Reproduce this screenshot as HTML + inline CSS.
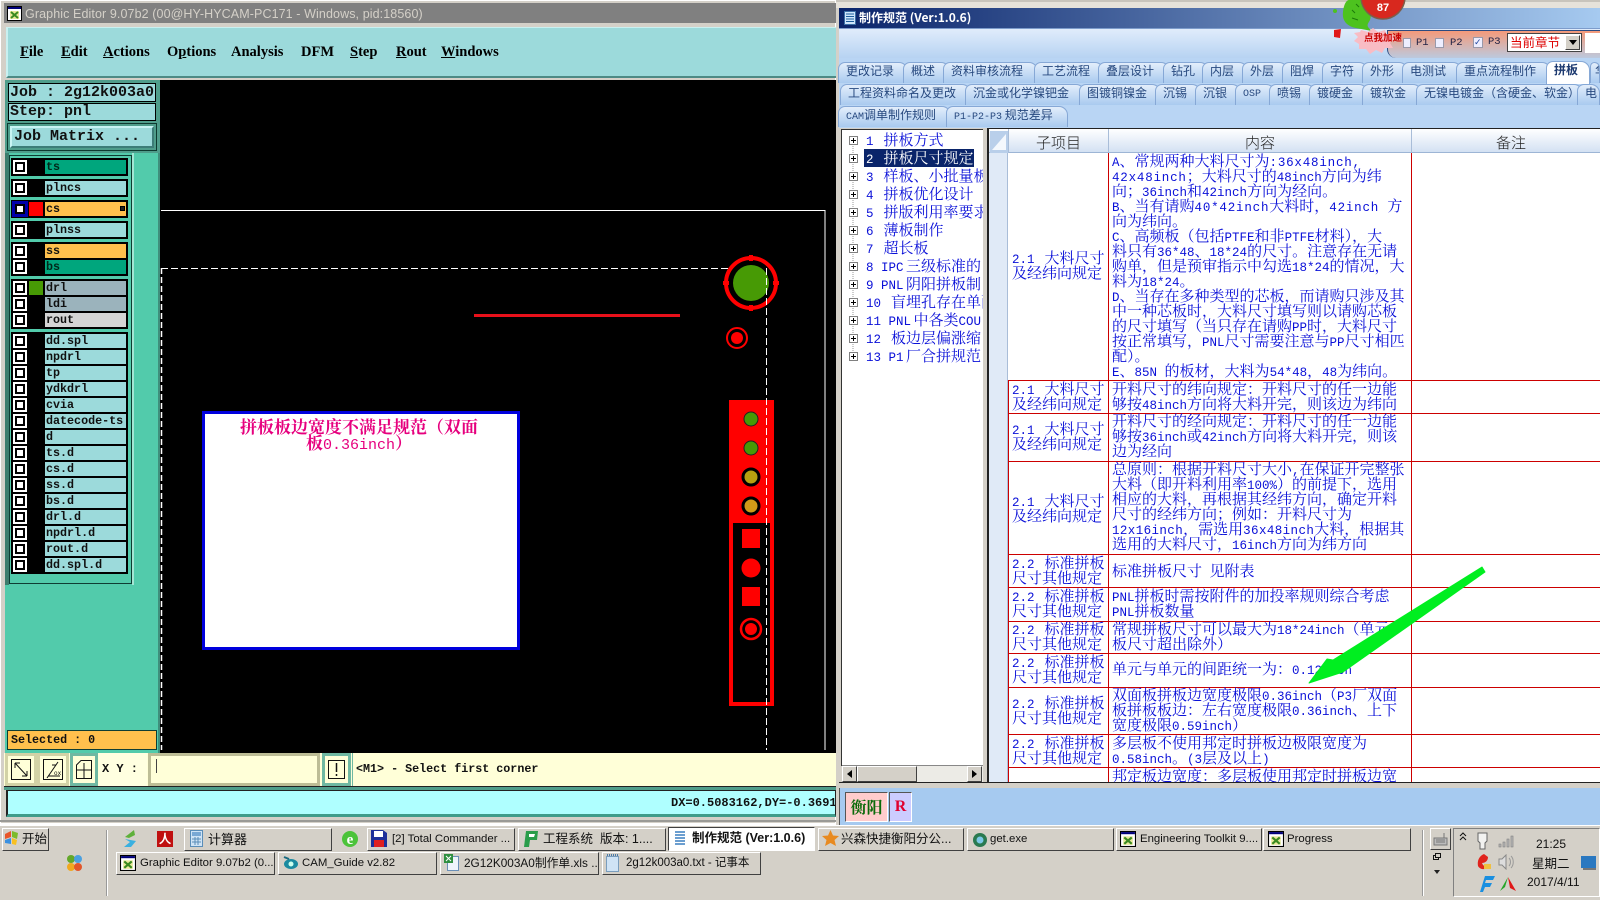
<!DOCTYPE html>
<html><head><meta charset="utf-8"><title>Graphic Editor</title>
<style>
html,body{margin:0;padding:0;width:1600px;height:900px;overflow:hidden;background:#d4d0c8}
div,span.a,svg{position:absolute;white-space:nowrap;box-sizing:border-box}
body{font-family:"Liberation Sans","WenQuanYi Zen Hei",sans-serif}
.m{font-family:"Liberation Serif",serif;font-weight:bold;font-size:14.5px;top:44px;color:#000}
.m i{font-style:normal;text-decoration:underline}
.mono{font-family:"Liberation Mono",monospace;font-weight:bold;color:#111}
.g{left:11px;width:117px;background:#000}
.ck{left:13px;width:14px;height:14px;background:#fff}
.ck:after{content:"";position:absolute;left:2px;top:2px;width:10px;height:10px;border:2px solid #000;background:#fff;box-sizing:border-box}
.n{left:45px;width:81px;height:14px;background:#9cdadb;font:bold 11.7px/14px "Liberation Mono",monospace;padding-left:1px;color:#101010}
.tab{height:21px;background:linear-gradient(#e3eefb,#a9caef);border:1px solid #86a8d6;border-bottom:0;border-radius:7px 9px 0 0;font:12px/15px "WenQuanYi Zen Hei","Noto Sans CJK SC",sans-serif;color:#27497f;padding-left:7px;overflow:hidden}
.cell{font:15px/15px "Noto Serif CJK SC","Noto Sans CJK SC",serif;color:#0a10d8;margin-top:-1px}
.cell p{margin:0;height:15px;line-height:15px;white-space:nowrap}
u{font:12.5px/15px "Liberation Mono",monospace;text-decoration:none}
u.s{padding-right:2.5px}
u.x{letter-spacing:.8px}
u.y{letter-spacing:.4px}
.tr{left:864px;font:15px/18px "Noto Serif CJK SC",serif;color:#0a10d8;height:18px;width:119px;overflow:hidden;padding-left:2px}
.pl{left:849px;width:9px;height:9px;border:1px solid #808080;background:#fff}
.pl:before{content:"";position:absolute;left:1px;top:3px;width:5px;height:1px;background:#000}
.pl:after{content:"";position:absolute;left:3px;top:1px;width:1px;height:5px;background:#000}
.rh{background:#cc0000;height:1px;left:1008px;width:592px}
.tb{height:23px;background:#d4d0c8;border:1px solid;border-color:#fff #404040 #404040 #fff;font:11.4px/21px "Liberation Sans","WenQuanYi Zen Hei",sans-serif;color:#111;overflow:hidden}
.pt{font:10.5px/14px "Liberation Mono",monospace;color:#224}
</style></head><body>

<!-- LEFT WINDOW -->
<div style="left:0;top:0;width:836px;height:826px;background:#d4d0c8;border:1px solid #fff"></div>
<div style="left:4px;top:3px;width:832px;height:20px;background:#808080"></div>
<svg style="left:7px;top:6px" width="15" height="15" viewBox="0 0 15 15"><rect x="0.5" y="0.5" width="14" height="14" fill="#fff" stroke="#000"/><rect x="1" y="1" width="13" height="2" fill="#00007a"/><rect x="3" y="5" width="9" height="8" fill="#e8e89a"/><path d="M4 6l7 6M11 6l-7 6" stroke="#3a8a20" stroke-width="2"/></svg>
<div style="left:25px;top:5px;font:12.5px/18px 'Liberation Sans',sans-serif;color:#d4d0c8;letter-spacing:.1px">Graphic Editor 9.07b2 (00@HY-HYCAM-PC171 - Windows, pid:18560)</div>

<div style="left:6px;top:27px;width:830px;height:51px;background:#9cdadb;border-left:2px solid #c9f0f0;border-top:1px solid #c9f0f0;border-bottom:2px solid #4d8a85"></div>
<div class="m" style="left:20px"><i>F</i>ile</div>
<div class="m" style="left:61px"><i>E</i>dit</div>
<div class="m" style="left:103px"><i>A</i>ctions</div>
<div class="m" style="left:167px">O<i>p</i>tions</div>
<div class="m" style="left:231px">Analysis</div>
<div class="m" style="left:301px">DFM</div>
<div class="m" style="left:350px"><i>S</i>tep</div>
<div class="m" style="left:396px"><i>R</i>out</div>
<div class="m" style="left:441px"><i>W</i>indows</div>

<!-- Canvas -->
<div style="left:158px;top:80px;width:678px;height:673px;background:#000"></div>
<svg style="left:158px;top:80px" width="678" height="673" viewBox="158 80 678 673">
<path d="M161 210.500H825V750" fill="none" stroke="#fff" stroke-width="1"/>
<path d="M161 268.500H750" fill="none" stroke="#fff" stroke-width="1" stroke-dasharray="7 3"/>
<path d="M161.500 268V750" fill="none" stroke="#fff" stroke-width="1.500" stroke-dasharray="6 3"/>
<rect x="474" y="314" width="206" height="3" fill="#e8101a"/>
<circle cx="751" cy="283" r="25" fill="#000" stroke="#f00" stroke-width="4"/>
<circle cx="751" cy="283" r="18" fill="#479a05"/>
<path d="M751 255v6M751 305v6M723 283h6M773 283h6" stroke="#f00" stroke-width="4"/>
<circle cx="737" cy="338" r="10" fill="#000" stroke="#f00" stroke-width="2"/>
<circle cx="737" cy="338" r="6" fill="#f00"/>
<rect x="729" y="400" width="45" height="122" fill="#f00"/>
<rect x="731" y="521" width="41" height="183" fill="#000" stroke="#f00" stroke-width="4"/>
<circle cx="751" cy="419" r="7" fill="#479a05" stroke="#222" stroke-width="1"/>
<circle cx="751" cy="448" r="7" fill="#479a05" stroke="#222" stroke-width="1"/>
<circle cx="751" cy="477" r="8" fill="#b8a010" stroke="#000" stroke-width="3"/>
<circle cx="751" cy="506" r="8" fill="#d09a18" stroke="#000" stroke-width="3"/>
<rect x="742" y="529" width="18" height="19" fill="#f00"/>
<circle cx="751" cy="568" r="9.500" fill="#f00"/>
<rect x="742" y="587" width="18" height="19" fill="#f00"/>
<circle cx="751" cy="629" r="10" fill="#000" stroke="#f00" stroke-width="2.500"/>
<circle cx="751" cy="629" r="6" fill="#f00"/>
<path d="M766.500 268V750" fill="none" stroke="#fff" stroke-width="1" stroke-dasharray="7 3"/>
</svg>
<div style="left:202px;top:411px;width:318px;height:239px;background:#fff;border:3px solid #0000dd"></div>
<div style="left:203px;top:418px;width:312px;text-align:center;font:bold 17px/16px 'Noto Serif CJK SC',serif;color:#e6007e;white-space:normal;letter-spacing:0">拼板板边宽度不满足规范（双面<br>板<span style="font:15px/16px 'Liberation Mono',monospace">0.36inch</span>）</div>

<!-- Left Panel -->
<div style="left:5px;top:80px;width:155px;height:673px;background:#52cbab;border-right:2px solid #3f8f7c"></div>
<div style="left:5px;top:80px;width:155px;height:73px;background:#4f9d8b"></div>
<div style="left:8px;top:83px;width:148px;height:19px;background:#9cdadb;border:1px solid #000;font:bold 15px/17px 'Liberation Mono',monospace;padding-left:1px;color:#111">Job : 2g12k003a0</div>
<div style="left:8px;top:103px;width:148px;height:18px;background:#9cdadb;border:1px solid #000;font:bold 15px/16px 'Liberation Mono',monospace;padding-left:1px;color:#111">Step: pnl</div>
<div style="left:7px;top:123px;width:150px;height:28px;border:1px solid #0d3a30;background:#4f9d8b"></div>
<div style="left:10px;top:126px;width:144px;height:22px;background:#9cdadb;border:2px solid;border-color:#c8f4f4 #3d7d78 #3d7d78 #c8f4f4;font:bold 15px/18px 'Liberation Mono',monospace;padding-left:2px;color:#111">Job Matrix ...</div>
<div style="left:5px;top:153px;width:4px;height:432px;background:#3d7d6d"></div>
<div style="left:9px;top:155px;width:123px;height:429px;border:1px solid #0f3d33;background:#52cbab"></div>
<div style="left:132px;top:153px;width:2px;height:432px;background:#a4e6d4"></div>

<div class="g" style="top:158px;height:18px"></div>
<div class="g" style="top:179px;height:18px"></div>
<div class="g" style="top:200px;height:18px"></div>
<div class="g" style="top:221px;height:18px"></div>
<div class="g" style="top:242px;height:34px"></div>
<div class="g" style="top:279px;height:50px"></div>
<div class="g" style="top:332px;height:242px"></div>

<div class="ck" style="top:160px"></div><div class="n" style="top:160px;background:#00a67d;color:#00281a">ts</div>
<div class="ck" style="top:181px"></div><div class="n" style="top:181px">plncs</div>
<div style="left:12px;top:201px;width:16px;height:16px;background:#0000aa"></div><div class="ck" style="top:202px;background:#0000aa"></div>
<div style="left:29px;top:202px;width:14px;height:14px;background:#f00"></div>
<div class="n" style="top:202px;background:#ffc04d">cs</div>
<div style="left:120px;top:206px;width:5px;height:5px;border:1px solid #000;background:#222"></div>
<div class="ck" style="top:223px"></div><div class="n" style="top:223px">plnss</div>
<div class="ck" style="top:244px"></div><div class="n" style="top:244px;background:#ffc04d">ss</div>
<div class="ck" style="top:260px"></div><div class="n" style="top:260px;background:#00a67d;color:#00281a">bs</div>
<div class="ck" style="top:281px"></div><div style="left:29px;top:281px;width:14px;height:14px;background:#479a05"></div><div class="n" style="top:281px;background:#9bb3bc">drl</div>
<div class="ck" style="top:297px"></div><div class="n" style="top:297px;background:#9bb3bc">ldi</div>
<div class="ck" style="top:313px"></div><div class="n" style="top:313px;background:#d4d4d4">rout</div>
<div class="ck" style="top:334px"></div><div class="n" style="top:334px">dd.spl</div>
<div class="ck" style="top:350px"></div><div class="n" style="top:350px">npdrl</div>
<div class="ck" style="top:366px"></div><div class="n" style="top:366px">tp</div>
<div class="ck" style="top:382px"></div><div class="n" style="top:382px">ydkdrl</div>
<div class="ck" style="top:398px"></div><div class="n" style="top:398px">cvia</div>
<div class="ck" style="top:414px"></div><div class="n" style="top:414px">datecode-ts</div>
<div class="ck" style="top:430px"></div><div class="n" style="top:430px">d</div>
<div class="ck" style="top:446px"></div><div class="n" style="top:446px">ts.d</div>
<div class="ck" style="top:462px"></div><div class="n" style="top:462px">cs.d</div>
<div class="ck" style="top:478px"></div><div class="n" style="top:478px">ss.d</div>
<div class="ck" style="top:494px"></div><div class="n" style="top:494px">bs.d</div>
<div class="ck" style="top:510px"></div><div class="n" style="top:510px">drl.d</div>
<div class="ck" style="top:526px"></div><div class="n" style="top:526px">npdrl.d</div>
<div class="ck" style="top:542px"></div><div class="n" style="top:542px">rout.d</div>
<div class="ck" style="top:558px"></div><div class="n" style="top:558px">dd.spl.d</div>

<div style="left:7px;top:730px;width:150px;height:20px;background:#ffc04d;border:1px solid #0f3d33;font:bold 11.7px/18px 'Liberation Mono',monospace;padding-left:3px;color:#111">Selected : 0</div>

<!-- Bottom tool row -->
<div style="left:4px;top:753px;width:832px;height:34px;background:#ffffd8;border-bottom:1px solid #222"></div>
<div style="left:5px;top:753px;width:32px;height:33px;background:#ffffd8;border:3px solid #d2d2a6"></div>
<svg style="left:11px;top:759px" width="20" height="21" viewBox="0 0 20 21"><rect x=".5" y=".5" width="19" height="20" fill="none" stroke="#111"/><path d="M4 4l12 13M4 4v5M4 4h5M16 17v-5M16 17h-5" fill="none" stroke="#111"/></svg>
<div style="left:37px;top:753px;width:32px;height:33px;background:#ffffd8;border:3px solid #d2d2a6"></div>
<svg style="left:43px;top:759px" width="20" height="21" viewBox="0 0 20 21"><rect x=".5" y=".5" width="19" height="20" fill="none" stroke="#111"/><path d="M15 3L4 19M5 17H17M9 6h4" fill="none" stroke="#111"/><text x="11" y="16" font-size="6" font-family="Liberation Mono">ox</text></svg>
<div style="left:70px;top:753px;width:28px;height:33px;background:#ffffd8;border:3px solid #6fb8a2"></div>
<svg style="left:76px;top:760px" width="16" height="19" viewBox="0 0 16 19"><path d="M5 .5H15.500V18.500H.5V5zM8 3v15M1 10h14" fill="none" stroke="#111"/></svg>
<div style="left:99px;top:753px;width:48px;height:33px;background:#ffffe0;font:bold 12px/33px 'Liberation Mono',monospace;padding-left:3px;color:#111">X Y :</div>
<div style="left:148px;top:753px;width:172px;height:33px;background:#ffffd8;border:3px solid #bdbd96"></div>
<div style="left:156px;top:759px;width:1px;height:14px;background:#444"></div>
<div style="left:322px;top:753px;width:29px;height:33px;background:#ffffd8;border:3px solid #6fb8a2"></div>
<svg style="left:328px;top:760px" width="17" height="19" viewBox="0 0 17 19"><rect x=".5" y=".5" width="16" height="18" fill="none" stroke="#111"/><path d="M8.500 3v9M8.500 14v2" stroke="#111" stroke-width="1.500"/></svg>
<div style="left:352px;top:753px;width:484px;height:33px;background:#ffffd8;font:bold 11.7px/33px 'Liberation Mono',monospace;padding-left:3px;color:#111;border-left:1px solid #6fb8a2">&lt;M1&gt; - Select first corner</div>

<div style="left:4px;top:787px;width:832px;height:3px;background:#4f9d8b"></div>
<div style="left:6px;top:790px;width:830px;height:27px;background:#afffff;border:1px solid #222;border-left:2px solid #222;border-bottom:3px solid #3f9c8a;overflow:hidden"><span class="mono a" style="left:663px;top:5px;font-size:12px;line-height:14px">DX=0.5083162,DY=-0.36912</span></div>
<div style="left:0;top:820px;width:836px;height:2px;background:#9a9a96"></div>
<div style="left:0;top:823px;width:836px;height:2px;background:#fff"></div>

<!-- RIGHT WINDOW -->
<div style="left:836px;top:0;width:764px;height:8px;background:#e6e2da;border-top:2px solid #c8c4bc"></div>
<div style="left:836px;top:8px;width:4px;height:780px;background:#d4d0c8"></div>
<div style="left:839px;top:8px;width:761px;height:20px;background:linear-gradient(90deg,#0a246a,#a6caf0)"></div>
<svg style="left:844px;top:11px" width="12" height="14" viewBox="0 0 12 14"><rect x=".5" y=".5" width="11" height="13" fill="#cfe6fb" stroke="#3a6ea5"/><path d="M2 3h8M2 5.500h8M2 8h8M2 10.500h8" stroke="#1c5d9c"/></svg>
<div style="left:859px;top:9px;font:bold 12px/18px 'Noto Sans CJK SC','Liberation Sans',sans-serif;color:#fff">制作规范 (Ver:1.0.6)</div>

<div style="left:839px;top:28px;width:761px;height:30px;background:linear-gradient(#e0ecfb,#b7d3f2);border-top:1px solid #7d9ccb"></div>
<div style="left:1387px;top:30px;width:213px;height:28px;background:linear-gradient(#f49a7a,#bcc9de);border-bottom-left-radius:9px;border-left:1px solid #2b4a80;border-top:1px solid #2b4a80"></div>
<div style="left:1403px;top:38px;width:8px;height:10px;background:#eef;border:1px solid #99a"></div>
<div class="pt" style="left:1416px;top:36px">P1</div>
<div style="left:1435px;top:38px;width:9px;height:10px;background:#eef;border:1px solid #99a"></div>
<div class="pt" style="left:1450px;top:36px">P2</div>
<div style="left:1473px;top:37px;width:10px;height:11px;background:#eef;border:1px solid #99a;font:9px/9px sans-serif;color:#2248a0">✓</div>
<div class="pt" style="left:1488px;top:35px">P3</div>
<div style="left:1507px;top:33px;width:75px;height:19px;background:#fff;border:1px solid #444;font:12.500px/16px 'Noto Sans CJK SC',sans-serif;color:#d00;padding-left:2px">当前章节</div>
<div style="left:1565px;top:35px;width:15px;height:15px;background:#d4d0c8;border:1px solid;border-color:#fff #404040 #404040 #fff"></div>
<svg style="left:1569px;top:40px" width="8" height="6"><path d="M0 0h8L4 5z" fill="#000"/></svg>
<div style="left:1585px;top:33px;width:15px;height:20px;background:#fff"></div>

<svg style="left:1330px;top:0" width="80" height="56" viewBox="0 0 80 56">
<path d="M13 12C14 3 17 0 19 0H34C40 6 42 14 40 20C37 25 36 26 42 31L26 28C16 26 12 20 13 12Z" fill="#4dc21f"/>
<path d="M22 10l3 3M26 4l3 3M22 18l6 2" stroke="#1c7a0a" fill="none"/>
<circle cx="5" cy="11" r="2" fill="#4dc21f"/>
<circle cx="53" cy="-3" r="22" fill="#d8281e" stroke="#7e5c48" stroke-width="1.500"/>
<text x="53" y="11" text-anchor="middle" font-family="Liberation Sans" font-weight="bold" font-size="11" fill="#fff">87</text>
<path d="M4 30l7-1-1 9-6-1z" fill="#e01818"/>
<path d="M31 30l7 2 5-4 5 4 7-2 1 4 7 1 1 4 -4 4 3 5-8 0-3 5-6-3-6 4-4-5-7 0 0-5-5-3 4-4-4-4 6-1z" fill="#f9bcc4"/>
</svg>
<div style="left:1364px;top:31px;font:bold 9.500px/12px 'Noto Sans CJK SC',sans-serif;color:#c80000">点我加速</div>

<div style="left:839px;top:58px;width:761px;height:70px;background:#b9d5f4"></div>

<div class="tab" style="left:838px;top:62px;width:70px">更改记录</div>
<div class="tab" style="left:903px;top:62px;width:47px">概述</div>
<div class="tab" style="left:943px;top:62px;width:95px">资料审核流程</div>
<div class="tab" style="left:1034px;top:62px;width:70px">工艺流程</div>
<div class="tab" style="left:1098px;top:62px;width:72px">叠层设计</div>
<div class="tab" style="left:1163px;top:62px;width:46px">钻孔</div>
<div class="tab" style="left:1202px;top:62px;width:46px">内层</div>
<div class="tab" style="left:1242px;top:62px;width:46px">外层</div>
<div class="tab" style="left:1282px;top:62px;width:46px">阻焊</div>
<div class="tab" style="left:1322px;top:62px;width:46px">字符</div>
<div class="tab" style="left:1362px;top:62px;width:46px">外形</div>
<div class="tab" style="left:1402px;top:62px;width:60px">电测试</div>
<div class="tab" style="left:1456px;top:62px;width:95px">重点流程制作</div>
<div class="tab" style="left:1590px;top:62px;width:10px;padding-left:4px">华</div>
<div class="tab" style="left:1546px;top:61px;width:44px;height:23px;background:#fff;font-weight:bold;color:#1d3a70;line-height:16px">拼板</div>

<div class="tab" style="left:840px;top:84px;width:131px">工程资料命名及更改</div>
<div class="tab" style="left:965px;top:84px;width:120px">沉金或化学镍钯金</div>
<div class="tab" style="left:1079px;top:84px;width:82px">图镀铜镍金</div>
<div class="tab" style="left:1155px;top:84px;width:46px">沉锡</div>
<div class="tab" style="left:1195px;top:84px;width:46px">沉银</div>
<div class="tab" style="left:1235px;top:84px;width:40px;font-family:'Liberation Mono',monospace;font-size:10px;line-height:20px">OSP</div>
<div class="tab" style="left:1269px;top:84px;width:46px">喷锡</div>
<div class="tab" style="left:1309px;top:84px;width:59px">镀硬金</div>
<div class="tab" style="left:1362px;top:84px;width:60px">镀软金</div>
<div class="tab" style="left:1416px;top:84px;width:167px">无镍电镀金（含硬金、软金）</div>
<div class="tab" style="left:1577px;top:84px;width:23px">电</div>

<div class="tab" style="left:838px;top:106px;width:113px"><span style="font:10px/15px 'Liberation Mono',monospace">CAM</span>调单制作规则</div>
<div class="tab" style="left:946px;top:106px;width:122px"><span style="font:10px/15px 'Liberation Mono',monospace">P1-P2-P3</span> 规范差异</div>

<div style="left:839px;top:128px;width:761px;height:660px;background:#d4d0c8"></div>

<!-- Tree -->
<div style="left:841px;top:129px;width:142px;height:637px;background:#fff;border-left:1px solid #333;border-top:1px solid #333"></div>
<svg style="left:842px;top:130px" width="20" height="235"><path d="M11 6V226" stroke="#999" stroke-dasharray="1 1"/><path d="M11 10h6M11 28h6M11 46h6M11 64h6M11 82h6M11 100h6M11 118h6M11 136h6M11 154h6M11 172h6M11 190h6M11 208h6M11 226h6" stroke="#999" stroke-dasharray="1 1"/></svg>
<div class="pl" style="top:136px"></div>
<div class="pl" style="top:154px"></div>
<div class="pl" style="top:172px"></div>
<div class="pl" style="top:190px"></div>
<div class="pl" style="top:208px"></div>
<div class="pl" style="top:226px"></div>
<div class="pl" style="top:244px"></div>
<div class="pl" style="top:262px"></div>
<div class="pl" style="top:280px"></div>
<div class="pl" style="top:298px"></div>
<div class="pl" style="top:316px"></div>
<div class="pl" style="top:334px"></div>
<div class="pl" style="top:352px"></div>
<div class="tr" style="top:131px"><u class="s">1&nbsp;</u>拼板方式</div>
<div style="left:864px;top:149px;width:110px;height:18px;background:#0a246a"></div>
<div class="tr" style="top:149px;color:#fff"><u class="s">2&nbsp;</u>拼板尺寸规定</div>
<div class="tr" style="top:167px"><u class="s">3&nbsp;</u>样板、小批量板</div>
<div class="tr" style="top:185px"><u class="s">4&nbsp;</u>拼板优化设计</div>
<div class="tr" style="top:203px"><u class="s">5&nbsp;</u>拼版利用率要求</div>
<div class="tr" style="top:221px"><u class="s">6&nbsp;</u>薄板制作</div>
<div class="tr" style="top:239px"><u class="s">7&nbsp;</u>超长板</div>
<div class="tr" style="top:257px"><u class="s">8&nbsp;IPC</u>三级标准的</div>
<div class="tr" style="top:275px"><u class="s">9&nbsp;PNL</u>阴阳拼板制</div>
<div class="tr" style="top:293px"><u class="s">10&nbsp;</u>盲埋孔存在单面</div>
<div class="tr" style="top:311px"><u class="s">11&nbsp;PNL</u>中各类<u>COU</u></div>
<div class="tr" style="top:329px"><u class="s">12&nbsp;</u>板边层偏涨缩</div>
<div class="tr" style="top:347px"><u class="s">13&nbsp;P1</u>厂合拼规范</div>
<div style="left:842px;top:765px;width:141px;height:17px;background:#ecebe6;border-top:1px solid #888"></div>
<div style="left:842px;top:766px;width:15px;height:16px;background:#d4d0c8;border:1px solid;border-color:#fff #404040 #404040 #fff"></div>
<svg style="left:847px;top:770px" width="5" height="8"><path d="M5 0v8L0 4z" fill="#000"/></svg>
<div style="left:857px;top:766px;width:60px;height:16px;background:#d4d0c8;border:1px solid;border-color:#fff #404040 #404040 #fff"></div>
<div style="left:967px;top:766px;width:15px;height:16px;background:#d4d0c8;border:1px solid;border-color:#fff #404040 #404040 #fff"></div>
<svg style="left:972px;top:770px" width="5" height="8"><path d="M0 0v8l5-4z" fill="#000"/></svg>

<!-- Grid -->
<div style="left:987px;top:128px;width:613px;height:654px;background:#fff;border-left:2px solid #222;border-top:1px solid #222"></div>
<div style="left:989px;top:129px;width:611px;height:24px;background:linear-gradient(#fff,#d3e1f3);border-bottom:1px solid #9db5d5"></div>
<div style="left:989px;top:153px;width:19px;height:629px;background:#e0eaf7;border-right:1px solid #a9bdd8"></div>
<div style="left:990px;top:131px;width:18px;height:22px;background:#b9cfea"></div>
<svg style="left:992px;top:134px" width="14" height="16"><path d="M14 0v16H0z" fill="#f4f8fd"/></svg>
<div style="left:1008px;top:129px;width:1px;height:24px;background:#a9bdd8"></div>
<div style="left:1108px;top:129px;width:1px;height:24px;background:#a9bdd8"></div>
<div style="left:1411px;top:129px;width:1px;height:24px;background:#a9bdd8"></div>
<div style="left:1036px;top:134px;font:15px/18px 'Noto Sans CJK SC',sans-serif;font-weight:300;color:#222">子项目</div>
<div style="left:1245px;top:134px;font:15px/18px 'Noto Sans CJK SC',sans-serif;font-weight:300;color:#222">内容</div>
<div style="left:1496px;top:134px;font:15px/18px 'Noto Sans CJK SC',sans-serif;font-weight:300;color:#222">备注</div>

<div style="left:1108px;top:153px;width:1px;height:629px;background:#cc0000"></div>
<div style="left:1411px;top:153px;width:1px;height:629px;background:#cc0000"></div>
<div style="left:1008px;top:381px;width:1px;height:401px;background:#cc0000"></div>
<div class="rh" style="top:380px"></div>
<div class="rh" style="top:413px"></div>
<div class="rh" style="top:461px"></div>
<div class="rh" style="top:554px"></div>
<div class="rh" style="top:587px"></div>
<div class="rh" style="top:621px"></div>
<div class="rh" style="top:653px"></div>
<div class="rh" style="top:687px"></div>
<div class="rh" style="top:734px"></div>
<div class="rh" style="top:767px"></div>

<div class="cell" style="left:1012px;top:251px"><p><u class="s">2.1&nbsp;</u>大料尺寸</p><p>及经纬向规定</p></div>
<div class="cell" style="left:1012px;top:382px"><p><u class="s">2.1&nbsp;</u>大料尺寸</p><p>及经纬向规定</p></div>
<div class="cell" style="left:1012px;top:422px"><p><u class="s">2.1&nbsp;</u>大料尺寸</p><p>及经纬向规定</p></div>
<div class="cell" style="left:1012px;top:494px"><p><u class="s">2.1&nbsp;</u>大料尺寸</p><p>及经纬向规定</p></div>
<div class="cell" style="left:1012px;top:556px"><p><u class="s">2.2&nbsp;</u>标准拼板</p><p>尺寸其他规定</p></div>
<div class="cell" style="left:1012px;top:589px"><p><u class="s">2.2&nbsp;</u>标准拼板</p><p>尺寸其他规定</p></div>
<div class="cell" style="left:1012px;top:622px"><p><u class="s">2.2&nbsp;</u>标准拼板</p><p>尺寸其他规定</p></div>
<div class="cell" style="left:1012px;top:655px"><p><u class="s">2.2&nbsp;</u>标准拼板</p><p>尺寸其他规定</p></div>
<div class="cell" style="left:1012px;top:696px"><p><u class="s">2.2&nbsp;</u>标准拼板</p><p>尺寸其他规定</p></div>
<div class="cell" style="left:1012px;top:736px"><p><u class="s">2.2&nbsp;</u>标准拼板</p><p>尺寸其他规定</p></div>

<div class="cell" style="left:1112px;top:154px">
<p><u>A</u>、常规两种大料尺寸为<u class="x">:36x48inch,</u></p>
<p><u class="x">42x48inch</u>；大料尺寸的<u>48inch</u>方向为纬</p>
<p>向；<u>36inch</u>和<u>42inch</u>方向为经向。</p>
<p><u>B</u>、当有请购<u class="x">40*42inch</u>大料时，<u class="x">42inch&nbsp;</u>方</p>
<p>向为纬向。</p>
<p><u>C</u>、高频板（包括<u>PTFE</u>和非<u>PTFE</u>材料），大</p>
<p>料只有<u>36*48</u>、<u>18*24</u>的尺寸。注意存在无请</p>
<p>购单，但是预审指示中勾选<u>18*24</u>的情况，大</p>
<p>料为<u>18*24</u>。</p>
<p><u>D</u>、当存在多种类型的芯板，而请购只涉及其</p>
<p>中一种芯板时，大料尺寸填写则以请购芯板</p>
<p>的尺寸填写（当只存在请购<u>PP</u>时，大料尺寸</p>
<p>按正常填写，<u>PNL</u>尺寸需要注意与<u>PP</u>尺寸相匹</p>
<p>配）。</p>
<p><u>E</u>、<u>85N&nbsp;</u>的板材，大料为<u>54*48</u>，<u>48</u>为纬向。</p>
</div>
<div class="cell" style="left:1112px;top:382px"><p>开料尺寸的纬向规定：开料尺寸的任一边能</p><p>够按<u>48inch</u>方向将大料开完，则该边为纬向</p></div>
<div class="cell" style="left:1112px;top:414px"><p>开料尺寸的经向规定：开料尺寸的任一边能</p><p>够按<u>36inch</u>或<u>42inch</u>方向将大料开完，则该</p><p>边为经向</p></div>
<div class="cell" style="left:1112px;top:462px"><p>总原则：根据开料尺寸大小<u>,</u>在保证开完整张</p><p>大料（即开料利用率<u>100%</u>）的前提下，选用</p><p>相应的大料，再根据其经纬方向，确定开料</p><p>尺寸的经纬方向；例如：开料尺寸为</p><p><u class="y">12x16inch</u>，需选用<u class="y">36x48inch</u>大料，根据其</p><p>选用的大料尺寸，<u>16inch</u>方向为纬方向</p></div>
<div class="cell" style="left:1112px;top:564px"><p>标准拼板尺寸<u>&nbsp;</u>见附表</p></div>
<div class="cell" style="left:1112px;top:589px"><p><u>PNL</u>拼板时需按附件的加投率规则综合考虑</p><p><u>PNL</u>拼板数量</p></div>
<div class="cell" style="left:1112px;top:622px"><p>常规拼板尺寸可以最大为<u>18*24inch</u>（单元</p><p>板尺寸超出除外）</p></div>
<div class="cell" style="left:1112px;top:662px"><p>单元与单元的间距统一为：<u>0.12inch</u></p></div>
<div class="cell" style="left:1112px;top:688px"><p>双面板拼板边宽度极限<u>0.36inch</u>（<u>P3</u>厂双面</p><p>板拼板板边：左右宽度极限<u>0.36inch</u>、上下</p><p>宽度极限<u>0.59inch</u>）</p></div>
<div class="cell" style="left:1112px;top:736px"><p>多层板不使用邦定时拼板边极限宽度为</p><p><u>0.58inch</u>。<u>(3</u>层及以上<u>)</u></p></div>
<div class="cell" style="left:1112px;top:769px"><p>邦定板边宽度：多层板使用邦定时拼板边宽</p></div>

<!-- Arrow -->
<svg style="left:1300px;top:560px" width="200" height="130" viewBox="1300 560 200 130"><path d="M1482 567L1485 572L1343 672L1309 683L1327 659L1333 660Z" fill="#00ee20" stroke="#00ee20" stroke-width="1" stroke-linejoin="round"/></svg>

<div style="left:839px;top:782px;width:761px;height:6px;background:#d4d0c8;border-top:1px solid #222"></div>
<div style="left:836px;top:788px;width:764px;height:37px;background:#a6caf0"></div>
<div style="left:836px;top:788px;width:4px;height:37px;background:#d4d0c8;border-right:1px solid #555"></div>
<div style="left:845px;top:792px;width:43px;height:30px;background:#fcc;border:1px solid;border-color:#555 #fff #fff #555;font:bold 16px/28px 'Noto Serif CJK SC',serif;color:#0a6a0a;text-align:center">衡阳</div>
<div style="left:889px;top:792px;width:23px;height:30px;background:#ccf;border:1px solid;border-color:#555 #fff #fff #555;font:bold 16px/28px 'Liberation Serif',serif;color:#e00030;text-align:center">R</div>

<!-- TASKBAR -->
<div style="left:0;top:825px;width:1600px;height:75px;background:#d4d0c8;border-top:1px solid #fff"></div>
<div class="tb" style="left:2px;top:828px;width:47px;padding-left:19px;font-size:12.5px">开始</div>
<svg style="left:4px;top:830px" width="15" height="16"><path d="M1 4l6-3v6l-6 2z" fill="#e8562a"/><path d="M8 1l6 2-1 6-5-2z" fill="#7cbb2a"/><path d="M1 10l6-2v6l-6-1z" fill="#3a90e0"/><path d="M8 8l5 2-1 5-4-1z" fill="#f8c020"/></svg>
<div style="left:106px;top:830px;width:2px;height:66px;background:#999;border-right:1px solid #fff"></div>
<svg style="left:65px;top:853px" width="20" height="20"><circle cx="6" cy="6" r="4" fill="#63a82a"/><circle cx="13" cy="6" r="4" fill="#4aa0e0"/><circle cx="6" cy="14" r="4" fill="#f0a820"/><circle cx="13" cy="14" r="4" fill="#e2562a"/></svg>
<svg style="left:122px;top:830px" width="18" height="18"><path d="M3 7L12 0l1 5-6 3z" fill="#5eb03a"/><path d="M3 9l11 2-5 6H2l6-5z" fill="#3ab0e0"/></svg>
<div style="left:157px;top:831px;width:16px;height:16px;background:#c01010;color:#fff;font:bold 12px/16px 'Liberation Serif',serif;text-align:center">人</div>
<div class="tb" style="left:184px;top:828px;width:148px;padding-left:23px;font-size:13px">计算器</div>
<svg style="left:190px;top:830px" width="14" height="18"><rect x=".5" y=".5" width="12" height="16" fill="#cfe3f5" stroke="#5a8db8"/><rect x="2" y="2" width="9" height="4" fill="#79a8d4"/><path d="M2 9h9M2 12h9M5 7v8M8 7v8" stroke="#5a8db8"/></svg>
<svg style="left:341px;top:830px" width="18" height="18"><circle cx="9" cy="9" r="8" fill="#4cc33a"/><text x="9" y="14" text-anchor="middle" font-family="Liberation Serif" font-weight="bold" font-size="15" fill="#fff">e</text></svg>
<div class="tb" style="left:367px;top:828px;width:148px;padding-left:24px">[2] Total Commander ...</div>
<svg style="left:371px;top:830px" width="16" height="17"><path d="M0 0h12l4 3v14H0z" fill="#1d2f9a"/><rect x="3" y="1" width="9" height="6" fill="#fff"/><rect x="3" y="10" width="10" height="7" fill="#e02020"/></svg>
<div class="tb" style="left:518px;top:828px;width:148px;padding-left:24px;font-size:12.500px">工程系统 &nbsp;版本: 1....</div>
<svg style="left:523px;top:830px" width="16" height="18"><path d="M3 1h12l-1 9H7l-1 7H1z" fill="#2a9d4a"/><path d="M6 4h6l-1 3H6z" fill="#fff"/></svg>
<div class="tb" style="left:668px;top:827px;width:147px;height:24px;background:#fff;border-color:#404040 #fff #fff #404040;padding-left:23px;font-weight:bold;font-size:12.500px;font-family:'Liberation Sans','Noto Sans CJK SC',sans-serif">制作规范 (Ver:1.0.6)</div>
<svg style="left:674px;top:830px" width="12" height="16"><path d="M1 2h10M1 5h10M1 8h10M1 11h10M1 14h10" stroke="#3a7fc0" stroke-width="1.500"/></svg>
<div class="tb" style="left:818px;top:828px;width:146px;padding-left:22px;font-size:12.500px">兴森快捷衡阳分公...</div>
<svg style="left:822px;top:830px" width="17" height="17"><path d="M8.500 0l2.500 5.500 6 .5-4.500 4 1.500 6-5.500-3-5.500 3 1.500-6L0 6l6-.5z" fill="#e88a20"/></svg>
<div class="tb" style="left:967px;top:828px;width:147px;padding-left:22px">get.exe</div>
<svg style="left:971px;top:829px" width="17" height="19"><circle cx="9" cy="11" r="7" fill="#2a7a50"/><circle cx="9" cy="11" r="3.500" fill="#7cc8e8"/></svg>
<div class="tb" style="left:1116px;top:828px;width:146px;padding-left:23px">Engineering Toolkit 9....</div>
<svg style="left:1120px;top:831px" width="16" height="16" viewBox="0 0 15 15"><rect x=".5" y=".5" width="14" height="14" fill="#fff" stroke="#000"/><rect x="1" y="1" width="13" height="2" fill="#00007a"/><rect x="3" y="5" width="9" height="8" fill="#e8e89a"/><path d="M4 6l7 6M11 6l-7 6" stroke="#3a8a20" stroke-width="2"/></svg>
<div class="tb" style="left:1263px;top:828px;width:148px;padding-left:23px">Progress</div>
<svg style="left:1268px;top:831px" width="16" height="16" viewBox="0 0 15 15"><rect x=".5" y=".5" width="14" height="14" fill="#fff" stroke="#000"/><rect x="1" y="1" width="13" height="2" fill="#00007a"/><rect x="3" y="5" width="9" height="8" fill="#e8e89a"/><path d="M4 6l7 6M11 6l-7 6" stroke="#3a8a20" stroke-width="2"/></svg>

<div class="tb" style="left:116px;top:852px;width:159px;padding-left:23px">Graphic Editor 9.07b2 (0...</div>
<svg style="left:120px;top:855px" width="16" height="16" viewBox="0 0 15 15"><rect x=".5" y=".5" width="14" height="14" fill="#fff" stroke="#000"/><rect x="1" y="1" width="13" height="2" fill="#00007a"/><rect x="3" y="5" width="9" height="8" fill="#e8e89a"/><path d="M4 6l7 6M11 6l-7 6" stroke="#3a8a20" stroke-width="2"/></svg>
<div class="tb" style="left:278px;top:852px;width:159px;padding-left:23px">CAM_Guide v2.82</div>
<svg style="left:282px;top:856px" width="17" height="14"><ellipse cx="9" cy="8" rx="7" ry="5" fill="#1a8aa0"/><circle cx="9" cy="8" r="2.500" fill="#cfe"/><path d="M2 1l5 2" stroke="#1a6a80" stroke-width="2"/></svg>
<div class="tb" style="left:440px;top:852px;width:159px;padding-left:23px;font-size:11.8px">2G12K003A0制作单.xls ...</div>
<svg style="left:444px;top:854px" width="16" height="18"><rect x="3.500" y="2.500" width="11" height="14" fill="#eef4fb" stroke="#6a8fb8"/><rect x="0" y="0" width="9" height="9" fill="#2f8f40"/><path d="M2 2l5 5M7 2L2 7" stroke="#fff"/></svg>
<div class="tb" style="left:602px;top:852px;width:159px;padding-left:23px;font-size:11.5px">2g12k003a0.txt - 记事本</div>
<svg style="left:606px;top:854px" width="14" height="18"><rect x=".5" y="2.500" width="12" height="15" fill="#cfe3f5" stroke="#7a9dbd"/><path d="M1 1h11" stroke="#4a7aa8" stroke-width="2" stroke-dasharray="1 1"/></svg>

<div style="left:1422px;top:830px;width:2px;height:66px;background:#999;border-right:1px solid #fff"></div>
<div class="tb" style="left:1430px;top:828px;width:21px;height:22px"></div>
<svg style="left:1433px;top:832px" width="15" height="14"><rect x="1" y="6" width="13" height="7" fill="#bbb" stroke="#777"/><path d="M3 8h9M3 10h9M11 6V1" stroke="#777"/></svg>
<svg style="left:1432px;top:852px" width="12" height="26"><rect x="1.500" y="3.500" width="5" height="4" fill="none" stroke="#111"/><rect x="3.500" y="1.500" width="5" height="4" fill="#d4d0c8" stroke="#111"/><path d="M2 18h6l-3 4z" fill="#222"/></svg>
<div style="left:1453px;top:828px;width:147px;height:69px;border:1px solid;border-color:#808080 #fff #fff #808080"></div>
<svg style="left:1459px;top:832px" width="8" height="10"><path d="M1 4l3-3 3 3M1 8l3-3 3 3" fill="none" stroke="#111"/></svg>
<svg style="left:1475px;top:832px" width="16" height="18"><path d="M3 1h9v8l-2 2v6H5v-6L3 9z" fill="#f2f2f0" stroke="#666"/></svg>
<svg style="left:1498px;top:834px" width="18" height="14"><path d="M1 13h2v-3H1zM5 13h2V8H5zM9 13h2V5H9zM13 13h2V2h-2z" fill="#bbb" stroke="#777" stroke-width=".6"/></svg>
<svg style="left:1475px;top:853px" width="17" height="18"><path d="M9 1C4 3 2 8 3 13c2 4 8 4 11 1l-1-2c-3 2-5 1-6-2 3 0 6-2 6-6z" fill="#e0231c"/><rect x="9" y="11" width="7" height="5" fill="#f0c040"/></svg>
<svg style="left:1498px;top:854px" width="17" height="16"><path d="M1 5h3l4-4v14l-4-4H1z" fill="#ddd" stroke="#888"/><path d="M11 4c2 2 2 6 0 8M13 2c3 3 3 9 0 12" fill="none" stroke="#999"/></svg>
<svg style="left:1480px;top:875px" width="16" height="18"><path d="M5 1h10l-2 4H6l-1 3h7l-2 4H5l-2 5H0z" fill="#1a8fe0"/></svg>
<svg style="left:1500px;top:877px" width="16" height="15"><path d="M8 0l8 14-6-3z" fill="#e01818"/><path d="M8 0L0 14l5-4z" fill="#27a52a"/></svg>
<svg style="left:1581px;top:855px" width="15" height="16"><rect x="0" y="1" width="15" height="12" fill="#2a78c0"/><rect x="2" y="13" width="13" height="2" fill="#777"/></svg>
<div style="left:1536px;top:837px;font:12px/15px 'Liberation Sans',sans-serif;color:#111">21:25</div>
<div style="left:1532px;top:855px;font:12.500px/16px 'Noto Sans CJK SC',sans-serif;color:#111">星期二</div>
<div style="left:1527px;top:875px;font:12px/15px 'Liberation Sans',sans-serif;color:#111">2017/4/11</div>
</body></html>
